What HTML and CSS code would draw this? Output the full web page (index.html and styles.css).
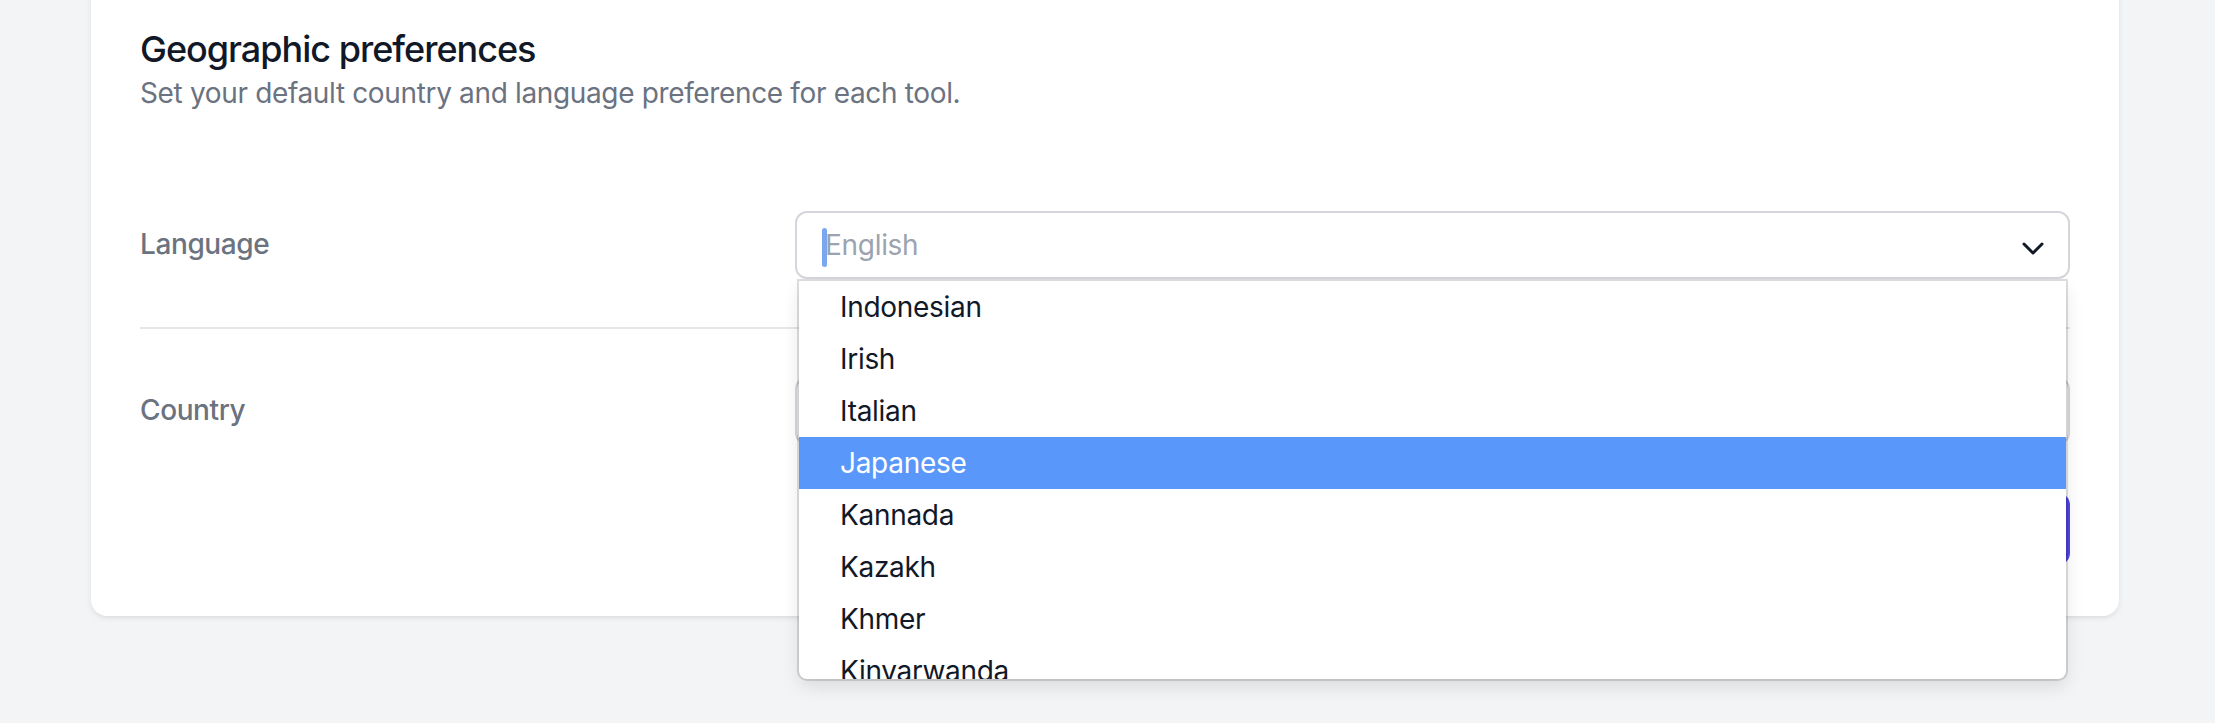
FILE: index.html
```html
<!DOCTYPE html>
<html lang="en">
<head>
<meta charset="utf-8">
<title>Geographic preferences</title>
<link rel="stylesheet" href="styles.css">
</head>
<body>
<main class="page">
  <section class="card">
    <h2 class="title">Geographic preferences</h2>
    <p class="subtitle">Set your default country and language preference for each tool.</p>
    <div class="fields">
      <div class="row">
        <label class="label">Language</label>
        <div class="select">
          <div class="control">
            <span class="value"><span class="caret"></span><span class="placeholder">English</span></span>
            <svg class="chevron" viewBox="0 0 22 13" width="22" height="13" aria-hidden="true"><polyline points="2,2 11,11 20,2" fill="none" stroke="#111827" stroke-width="3" stroke-linecap="round" stroke-linejoin="round"/></svg>
          </div>
          <div class="menu">
            <div class="option">Indonesian</div>
            <div class="option">Irish</div>
            <div class="option">Italian</div>
            <div class="option option-active">Japanese</div>
            <div class="option">Kannada</div>
            <div class="option">Kazakh</div>
            <div class="option">Khmer</div>
            <div class="option">Kinyarwanda</div>
          </div>
        </div>
      </div>
      <div class="row row-divided">
        <label class="label">Country</label>
        <div class="select">
          <div class="control">
            <span class="value"></span>
            <svg class="chevron" viewBox="0 0 22 13" width="22" height="13" aria-hidden="true"><polyline points="2,2 11,11 20,2" fill="none" stroke="#111827" stroke-width="3" stroke-linecap="round" stroke-linejoin="round"/></svg>
          </div>
        </div>
      </div>
    </div>
    <div class="actions">
      <button class="btn" type="button" aria-label="Save"></button>
    </div>
  </section>
</main>
</body>
</html>
```
FILE: styles.css
```css
html, body {
  margin: 0;
  padding: 0;
}
body {
  background: #f3f4f6;
  font-family: Inter, "Noto Sans", "Liberation Sans", sans-serif;
  height: 723px;
  overflow: hidden;
}
.page {
  padding: 0;
}
.card {
  box-sizing: border-box;
  width: 2028px;
  margin: -23px 0 0 91px;
  padding: 48px 49px 51px;
  background: #ffffff;
  border-radius: 16px;
  box-shadow: 0 2px 6px rgba(0, 0, 0, 0.08), 0 2px 4px -2px rgba(0, 0, 0, 0.06);
}
.title {
  margin: 0;
  font-size: 36px;
  line-height: 48px;
  font-weight: 500;
  letter-spacing: -1px;
  color: #111827;
}
.subtitle {
  margin: 0;
  font-size: 28px;
  line-height: 40px;
  letter-spacing: -0.35px;
  color: #6b7280;
}
.fields {
  margin-top: 50px;
}
.row {
  display: grid;
  grid-template-columns: 655px 1fr;
  padding: 48px 0;
}
.row-divided {
  border-top: 2px solid #e5e7eb;
}
.label {
  padding-top: 13px;
  font-size: 28px;
  line-height: 40px;
  font-weight: 500;
  letter-spacing: -0.4px;
  color: #6b7280;
}
.select {
  position: relative;
}
.control {
  box-sizing: border-box;
  height: 68px;
  display: flex;
  align-items: center;
  justify-content: space-between;
  padding: 0 24px 0 28px;
  border: 2px solid #d4d6db;
  border-radius: 12px;
  background: #ffffff;
  font-size: 28px;
  letter-spacing: -0.3px;
  color: #111827;
}
.value {
  display: flex;
  align-items: center;
}
.caret {
  display: inline-block;
  width: 5px;
  height: 39px;
  margin: 4px -2px 0 -3px;
  border-radius: 3px;
  background: #7ba6f0;
}
.placeholder {
  color: #9ca3af;
}
.chevron {
  margin-top: 7px;
}
.menu {
  position: absolute;
  z-index: 10;
  top: 70px;
  left: 4px;
  right: 4px;
  height: 398px;
  overflow: hidden;
  background: #ffffff;
  border-radius: 0 0 8px 8px;
  box-shadow: 0 0 0 2px rgba(0, 0, 0, 0.13), 0 8px 18px rgba(0, 0, 0, 0.1);
}
.option {
  height: 52px;
  line-height: 52px;
  padding-left: 41px;
  font-size: 28px;
  letter-spacing: -0.3px;
  color: #111827;
}
.option-active {
  background: #5998fa;
  color: #ffffff;
}
.actions {
  display: flex;
  justify-content: flex-end;
}
.btn {
  width: 180px;
  height: 72px;
  border: none;
  border-radius: 12px;
  background: #4f46e5;
}
```
